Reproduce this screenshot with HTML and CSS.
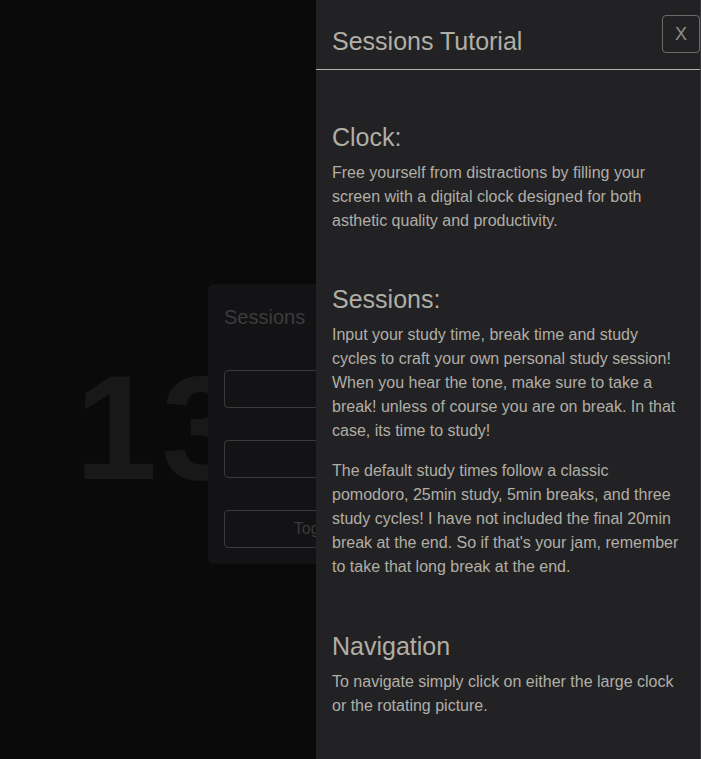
FILE: index.html
```html
<!DOCTYPE html>
<html lang="en">
<head>
<meta charset="utf-8">
<title>Sessions Tutorial</title>
<link rel="stylesheet" href="styles.css">
</head>
<body>
<main class="page">
  <div class="clock">13:45</div>
  <div class="session-card">
    <h3 class="card-title">Sessions</h3>
    <div class="card-fields">
      <div class="field"></div>
      <div class="field"></div>
      <div class="field button">Toggle Session</div>
    </div>
  </div>
</main>
<div class="backdrop"></div>
<aside class="panel">
  <header class="panel-header">
    <h1 class="panel-title">Sessions Tutorial</h1>
    <button class="close-btn">X</button>
  </header>
  <div class="panel-body">
    <section class="section">
      <h2 class="section-title">Clock:</h2>
      <p class="text">Free yourself from distractions by filling your screen with a digital clock designed for both asthetic quality and productivity.</p>
    </section>
    <section class="section">
      <h2 class="section-title">Sessions:</h2>
      <p class="text">Input your study time, break time and study cycles to craft your own personal study session! When you hear the tone, make sure to take a break! unless of course you are on break. In that case, its time to study!</p>
      <p class="text">The default study times follow a classic pomodoro, 25min study, 5min breaks, and three study cycles! I have not included the final 20min break at the end. So if that's your jam, remember to take that long break at the end.</p>
    </section>
    <section class="section section-last">
      <h2 class="section-title">Navigation</h2>
      <p class="text">To navigate simply click on either the large clock or the rotating picture.</p>
    </section>
  </div>
</aside>
</body>
</html>
```

FILE: styles.css
```css
* { box-sizing: border-box; }
html, body { margin: 0; padding: 0; height: 100%; overflow: hidden; }
body {
  background: #0a0a0a;
  font-family: "Liberation Sans", Arial, sans-serif;
}
.page {
  position: relative;
  height: 759px;
  width: 701px;
}
.clock {
  padding-top: 354px;
  padding-left: 75px;
  font-family: "Liberation Sans", Arial, sans-serif;
  font-weight: bold;
  font-size: 148px;
  line-height: 1;
  color: #181818;
  letter-spacing: 4px;
  white-space: nowrap;
}
.session-card {
  position: absolute;
  left: 208px;
  top: 284px;
  width: 280px;
  height: 280px;
  background: #131315;
  border-radius: 6px;
  padding: 16px;
}
.card-title {
  margin: 0;
  font-weight: normal;
  font-size: 20px;
  line-height: 34px;
  color: #3c3c3c;
}
.card-fields {
  margin-top: 36px;
  display: flex;
  flex-direction: column;
  gap: 32px;
}
.field {
  height: 38px;
  border: 1px solid #3a3a3a;
  border-radius: 4px;
}
.field.button {
  text-align: center;
  font-size: 16px;
  line-height: 36px;
  color: #3a3a3a;
  white-space: nowrap;
}
.backdrop {
  position: fixed;
  inset: 0;
  background: rgba(0, 0, 0, 0);
}
.panel {
  position: fixed;
  top: 0;
  left: 316px;
  width: 385px;
  height: 759px;
  background: #222224;
  border-right: 1px solid #3a3a3c;
  color: #b1aea6;
  display: flex;
  flex-direction: column;
}
.panel-header {
  height: 70px;
  border-bottom: 1px solid #b4b2ae;
  display: flex;
  align-items: flex-start;
  justify-content: space-between;
  padding: 0 0 0 16px;
}
.panel-title {
  margin: 27px 0 0;
  font-weight: normal;
  font-size: 25px;
  line-height: 28px;
  color: #b1aea6;
}
.close-btn {
  margin-top: 15px;
  width: 38px;
  height: 38px;
  background: transparent;
  border: 1px solid #6a6a68;
  border-radius: 4px;
  color: #8e8c88;
  font-family: "Liberation Sans", Arial, sans-serif;
  font-size: 18px;
  padding: 0;
}
.panel-body {
  padding: 17px 16px 0;
}
.section { padding-top: 36px; }
.section-last { padding-top: 37px; }
.section-title {
  margin: 0 0 9px;
  font-weight: normal;
  font-size: 25px;
  line-height: 29px;
  color: #b1aea6;
}
.text {
  margin: 0 0 16px;
  font-size: 16px;
  line-height: 24px;
}
```
